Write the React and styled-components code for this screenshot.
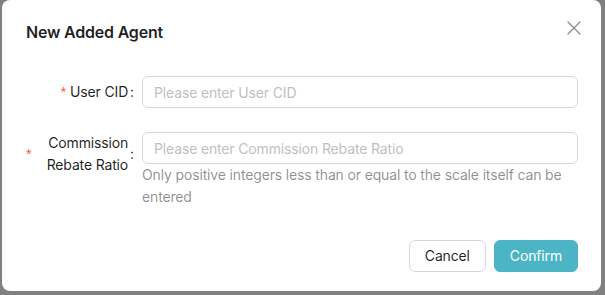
import React from 'react';
import styled, { createGlobalStyle } from 'styled-components';

const GlobalStyle = createGlobalStyle`
  html, body {
    margin: 0;
    background: #808080;
    font-family: Inter, "Noto Sans", "Liberation Sans", sans-serif;
    letter-spacing: -0.15px;
  }
  * {
    box-sizing: border-box;
  }
`;

function CloseIcon() {
  return (
    <svg width="14" height="14" viewBox="0 0 14 14" fill="none">
      <path d="M1 1L13 13M13 1L1 13" stroke="#8c8c8c" strokeWidth="1.3" strokeLinecap="round" />
    </svg>
  );
}

function Field({ label, placeholder, help }) {
  return (
    <Row>
      <LabelCol>
        <Required>*</Required>
        <LabelText>{label}</LabelText>
        <Colon>:</Colon>
      </LabelCol>
      <Control>
        <Input placeholder={placeholder} />
        {help && <Help>{help}</Help>}
      </Control>
    </Row>
  );
}

export default function App() {
  return (
    <Page>
      <GlobalStyle />
      <Modal>
        <Header>
          <Title>New Added Agent</Title>
          <CloseButton aria-label="close">
            <CloseIcon />
          </CloseButton>
        </Header>
        <Form>
          <Field label="User CID" placeholder="Please enter User CID" />
          <Field
            label="Commission Rebate Ratio"
            placeholder="Please enter Commission Rebate Ratio"
            help="Only positive integers less than or equal to the scale itself can be entered"
          />
        </Form>
        <Footer>
          <Button>Cancel</Button>
          <Button primary>Confirm</Button>
        </Footer>
      </Modal>
    </Page>
  );
}

const Page = styled.div`
  width: 605px;
  height: 295px;
  padding: 0 4px 4px 2px;
`;

const Modal = styled.div`
  width: 599px;
  height: 291px;
  background: #fff;
  border-radius: 8px;
  padding: 20px 23px 0 24px;
  display: flex;
  flex-direction: column;
`;

const Header = styled.div`
  display: flex;
  justify-content: space-between;
  align-items: flex-start;
`;

const Title = styled.div`
  font-size: 16px;
  line-height: 24px;
  font-weight: 600;
  letter-spacing: -0.2px;
  color: rgba(0, 0, 0, 0.88);
`;

const CloseButton = styled.button`
  width: 16px;
  height: 16px;
  margin-right: -4px;
  padding: 0;
  border: none;
  background: transparent;
  display: flex;
  align-items: center;
  justify-content: center;
  cursor: pointer;
`;

const Form = styled.div`
  margin-top: 32px;
  display: flex;
  flex-direction: column;
  gap: 24px;
`;

const Row = styled.div`
  display: flex;
  align-items: flex-start;
`;

const LabelCol = styled.label`
  width: 116px;
  flex: none;
  min-height: 32px;
  display: flex;
  align-items: center;
  justify-content: flex-end;
  font-size: 14px;
  line-height: 22px;
  color: rgba(0, 0, 0, 0.88);
`;

const Required = styled.span`
  color: #ff4d4f;
  font-size: 14px;
  margin-right: 4px;
  font-family: SimSun, "Liberation Sans", sans-serif;
  line-height: 1;
`;

const LabelText = styled.span`
  text-align: right;
`;

const Colon = styled.span`
  margin: 0 8px 0 2px;
`;

const Control = styled.div`
  flex: 1;
  display: flex;
  flex-direction: column;
`;

const Input = styled.input`
  height: 32px;
  width: 100%;
  padding: 4px 11px;
  border: 1px solid #d9d9d9;
  border-radius: 6px;
  font-family: inherit;
  font-size: 14px;
  letter-spacing: inherit;
  color: rgba(0, 0, 0, 0.88);
  outline: none;
  &::placeholder {
    color: #bfbfbf;
  }
`;

const Help = styled.div`
  font-size: 14px;
  line-height: 22px;
  color: rgba(0, 0, 0, 0.45);
`;

const Footer = styled.div`
  margin-top: 32px;
  display: flex;
  justify-content: flex-end;
  gap: 8px;
`;

const Button = styled.button`
  height: 32px;
  padding: 4px 15px;
  border-radius: 6px;
  font-family: inherit;
  font-size: 14px;
  line-height: 22px;
  letter-spacing: inherit;
  cursor: pointer;
  border: 1px solid ${(p) => (p.primary ? '#4bb5c5' : '#d9d9d9')};
  background: ${(p) => (p.primary ? '#4bb5c5' : '#fff')};
  color: ${(p) => (p.primary ? '#fff' : 'rgba(0, 0, 0, 0.88)')};
`;
